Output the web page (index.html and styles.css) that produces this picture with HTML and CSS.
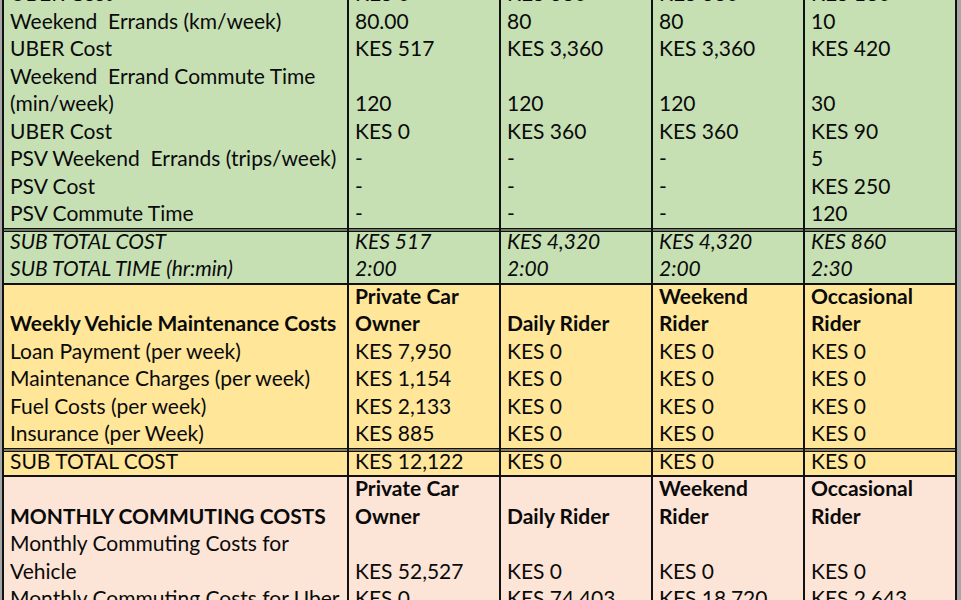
FILE: index.html
```html
<!DOCTYPE html>
<html>
<head>
<meta charset="utf-8">
<link rel="stylesheet" href="styles.css">
</head>
<body>
<div class="sheet">
  <div class="row green"><div class="c">UBER Cost</div><div class="c">KES 0</div><div class="c">KES 360</div><div class="c">KES 360</div><div class="c last">KES 180</div></div>
  <div class="row green"><div class="c">Weekend&nbsp; Errands (km/week)</div><div class="c">80.00</div><div class="c">80</div><div class="c">80</div><div class="c last">10</div></div>
  <div class="row green"><div class="c">UBER Cost</div><div class="c">KES 517</div><div class="c">KES 3,360</div><div class="c">KES 3,360</div><div class="c last">KES 420</div></div>
  <div class="row green two"><div class="c">Weekend&nbsp; Errand Commute Time (min/week)</div><div class="c">120</div><div class="c">120</div><div class="c">120</div><div class="c last">30</div></div>
  <div class="row green"><div class="c">UBER Cost</div><div class="c">KES 0</div><div class="c">KES 360</div><div class="c">KES 360</div><div class="c last">KES 90</div></div>
  <div class="row green"><div class="c">PSV Weekend&nbsp; Errands (trips/week)</div><div class="c">-</div><div class="c">-</div><div class="c">-</div><div class="c last">5</div></div>
  <div class="row green"><div class="c">PSV Cost</div><div class="c">-</div><div class="c">-</div><div class="c">-</div><div class="c last">KES 250</div></div>
  <div class="row green"><div class="c">PSV Commute Time</div><div class="c">-</div><div class="c">-</div><div class="c">-</div><div class="c last">120</div></div>
  <div class="row green it topdbl"><div class="c">SUB TOTAL COST</div><div class="c">KES 517</div><div class="c">KES 4,320</div><div class="c">KES 4,320</div><div class="c last">KES 860</div></div>
  <div class="row green it"><div class="c">SUB TOTAL TIME (hr:min)</div><div class="c">2:00</div><div class="c">2:00</div><div class="c">2:00</div><div class="c last">2:30</div></div>

  <div class="row yellow two bold topsgl"><div class="c">Weekly Vehicle Maintenance Costs</div><div class="c">Private Car Owner</div><div class="c">Daily Rider</div><div class="c">Weekend Rider</div><div class="c last">Occasional Rider</div></div>
  <div class="row yellow"><div class="c">Loan Payment (per week)</div><div class="c">KES 7,950</div><div class="c">KES 0</div><div class="c">KES 0</div><div class="c last">KES 0</div></div>
  <div class="row yellow"><div class="c">Maintenance Charges (per week)</div><div class="c">KES 1,154</div><div class="c">KES 0</div><div class="c">KES 0</div><div class="c last">KES 0</div></div>
  <div class="row yellow"><div class="c">Fuel Costs (per week)</div><div class="c">KES 2,133</div><div class="c">KES 0</div><div class="c">KES 0</div><div class="c last">KES 0</div></div>
  <div class="row yellow"><div class="c">Insurance (per Week)</div><div class="c">KES 885</div><div class="c">KES 0</div><div class="c">KES 0</div><div class="c last">KES 0</div></div>
  <div class="row yellow topdbl"><div class="c">SUB TOTAL COST</div><div class="c">KES 12,122</div><div class="c">KES 0</div><div class="c">KES 0</div><div class="c last">KES 0</div></div>

  <div class="row pink two bold topsgl"><div class="c">MONTHLY COMMUTING COSTS</div><div class="c">Private Car Owner</div><div class="c">Daily Rider</div><div class="c">Weekend Rider</div><div class="c last">Occasional Rider</div></div>
  <div class="row pink two"><div class="c">Monthly Commuting Costs for Vehicle</div><div class="c">KES 52,527</div><div class="c">KES 0</div><div class="c">KES 0</div><div class="c last">KES 0</div></div>
  <div class="row pink"><div class="c">Monthly Commuting Costs for Uber</div><div class="c">KES 0</div><div class="c">KES 74,403</div><div class="c">KES 18,720</div><div class="c last">KES 2,643</div></div>
</div>
</body>
</html>
```
FILE: styles.css
```css
html, body {
  margin: 0;
  padding: 0;
  background: #a6a6a6;
  overflow: hidden;
}
.sheet {
  margin: -20px 0 0 2px;
  width: 955px;
  font-family: Lato, "Open Sans", sans-serif;
  font-size: 21px;
  color: #0a0a0a;
}
.row {
  display: grid;
  grid-template-columns: 345px 152px 152px 152px 154px;
  height: 27.5px;
  background: var(--bg);
}
.row.two { height: 55px; }
.green { --bg: #c6e0b4; }
.yellow { --bg: #ffe699; }
.pink { --bg: #fce4d6; }
.row.topsgl { box-shadow: inset 0 2px #111; }
.row.topdbl { box-shadow: inset 0 1.5px #111, inset 0 2.5px var(--bg), inset 0 4px #111; }
.c {
  box-sizing: border-box;
  border-left: 2px solid #111;
  padding: 0 4px 1px 6px;
  line-height: 27.5px;
  display: flex;
  align-items: flex-end;
  overflow: hidden;
}
.c.last { border-right: 2px solid #111; }
.it .c { font-style: italic; }
.bold .c { font-weight: bold; }
```
